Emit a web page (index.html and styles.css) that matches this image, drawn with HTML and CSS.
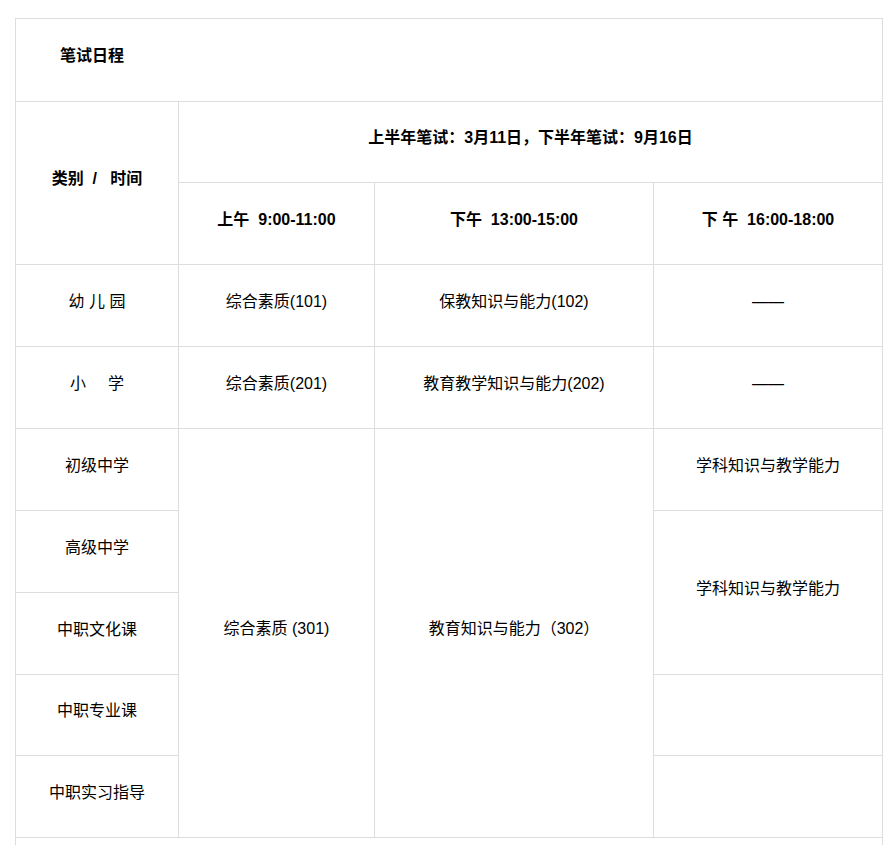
FILE: index.html
```html
<!DOCTYPE html>
<html lang="zh-CN">
<head>
<meta charset="utf-8">
<title>笔试日程</title>
<link rel="stylesheet" href="styles.css">
</head>
<body>
<div class="page">
  <table class="schedule">
    <colgroup>
      <col class="c1"><col class="c2"><col class="c3"><col class="c4">
    </colgroup>
    <tbody>
      <tr class="r-title">
        <td colspan="4" class="title"><span class="in">笔试日程</span></td>
      </tr>
      <tr class="r-81">
        <td rowspan="2" class="bold"><span class="in">类别&nbsp; /&nbsp;&nbsp; 时间</span></td>
        <td colspan="3" class="bold"><span class="in">上半年笔试：3月11日，下半年笔试：9月16日</span></td>
      </tr>
      <tr>
        <td class="bold"><span class="in">上午&nbsp; 9:00-11:00</span></td>
        <td class="bold"><span class="in">下午&nbsp; 13:00-15:00</span></td>
        <td class="bold"><span class="in">下 午&nbsp; 16:00-18:00</span></td>
      </tr>
      <tr>
        <td><span class="in">幼 儿 园</span></td>
        <td><span class="in">综合素质(101)</span></td>
        <td><span class="in">保教知识与能力(102)</span></td>
        <td><span class="in">——</span></td>
      </tr>
      <tr>
        <td><span class="in">小&nbsp;&nbsp;&nbsp;&nbsp; 学</span></td>
        <td><span class="in">综合素质(201)</span></td>
        <td><span class="in">教育教学知识与能力(202)</span></td>
        <td><span class="in">——</span></td>
      </tr>
      <tr>
        <td><span class="in">初级中学</span></td>
        <td rowspan="5"><span class="in">综合素质 (301)</span></td>
        <td rowspan="5"><span class="in">教育知识与能力（302）</span></td>
        <td><span class="in">学科知识与教学能力</span></td>
      </tr>
      <tr>
        <td><span class="in">高级中学</span></td>
        <td rowspan="2"><span class="in">学科知识与教学能力</span></td>
      </tr>
      <tr>
        <td><span class="in">中职文化课</span></td>
      </tr>
      <tr class="r-81">
        <td><span class="in">中职专业课</span></td>
        <td></td>
      </tr>
      <tr>
        <td><span class="in">中职实习指导</span></td>
        <td></td>
      </tr>
      <tr>
        <td colspan="4"></td>
      </tr>
    </tbody>
  </table>
</div>
</body>
</html>
```
FILE: styles.css
```css
html, body {
  margin: 0;
  padding: 0;
  background: #ffffff;
}

body {
  font-family: "Liberation Sans", Arial, "Noto Sans CJK SC", sans-serif;
  font-size: 16px;
  color: #000000;
}

.page {
  padding: 18px 0 0 15px;
}

.schedule {
  border-collapse: collapse;
  table-layout: fixed;
  width: 868px;
}

.c1 { width: 163px; }
.c2 { width: 196px; }
.c3 { width: 279px; }
.c4 { width: 229px; }

.schedule td {
  border: 1px solid #dddddd;
  height: 82px;
  padding: 0 4px 8px;
  text-align: center;
  vertical-align: middle;
  line-height: 24px;
  box-sizing: border-box;
}

.schedule .r-title td {
  height: 83px;
}

.schedule .r-81 td {
  height: 81px;
}

.schedule td.title {
  text-align: left;
  padding-left: 44px;
  font-weight: bold;
}

.schedule td.bold {
  font-weight: bold;
}
```
